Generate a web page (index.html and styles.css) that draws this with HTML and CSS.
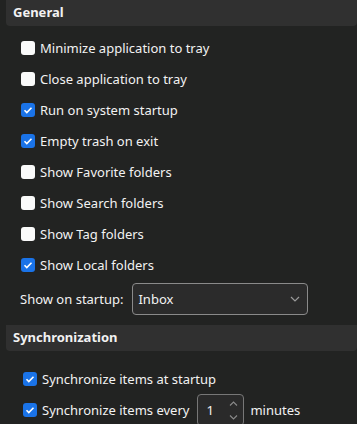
FILE: index.html
```html
<!DOCTYPE html>
<html lang="en">
<head>
    <meta charset="UTF-8">
    <meta name="viewport" content="width=device-width, initial-scale=1.0">
    <title>Settings</title>
    <link rel="stylesheet" href="styles.css">
</head>
<body>
    <div class="section-head">General</div>
    <div class="section-body">
        <label class="row"><span class="box"></span>Minimize application to tray</label>
        <label class="row"><span class="box"></span>Close application to tray</label>
        <label class="row"><span class="box checked"></span>Run on system startup</label>
        <label class="row"><span class="box checked"></span>Empty trash on exit</label>
        <label class="row"><span class="box"></span>Show Favorite folders</label>
        <label class="row"><span class="box"></span>Show Search folders</label>
        <label class="row"><span class="box"></span>Show Tag folders</label>
        <label class="row"><span class="box checked"></span>Show Local folders</label>
        <div class="startup">
            <span>Show on startup:</span>
            <div class="select">
                <span>Inbox</span>
                <svg width="10" height="6" viewBox="0 0 10 6"><path d="M1 1l4 4 4-4" fill="none" stroke="#9a9a9a" stroke-width="1.2"/></svg>
            </div>
        </div>
    </div>

    <div class="section-head">Synchronization</div>
    <div class="section-body sync">
        <label class="row"><span class="box checked"></span>Synchronize items at startup</label>
        <div class="row">
            <span class="box checked"></span>Synchronize items every
            <div class="spin">
                <span>1</span>
                <div class="arrows">
                    <svg width="9" height="5" viewBox="0 0 9 5"><path d="M1 4.5l3.5-3.5 3.5 3.5" fill="none" stroke="#8a8a8a" stroke-width="1.1"/></svg>
                    <svg width="9" height="5" viewBox="0 0 9 5"><path d="M1 0.5l3.5 3.5 3.5-3.5" fill="none" stroke="#8a8a8a" stroke-width="1.1"/></svg>
                </div>
            </div>
            minutes
        </div>
    </div>
</body>
</html>
```

FILE: styles.css
```css
body {
    margin: 0;
    background-color: #222322;
    color: #f2f2f2;
    font-family: "Noto Sans", "Open Sans", sans-serif;
    font-size: 13px;
    overflow: hidden;
}
.section-head {
    margin-left: 6px;
    height: 26px;
    line-height: 25px;
    padding-left: 7px;
    background-color: #303030;
    border-radius: 0 0 4px 4px;
    font-weight: bold;
    font-size: 13px;
}
.section-body {
    padding: 6px 0 10px 21px;
}
.row {
    display: flex;
    align-items: center;
    height: 31.1px;
}
.box {
    width: 14px;
    height: 14px;
    border-radius: 3px;
    background-color: #fafafa;
    margin-right: 5px;
    flex-shrink: 0;
}
.box.checked {
    background-color: #1a73e8;
    background-image: url("data:image/svg+xml;utf8,<svg xmlns='http://www.w3.org/2000/svg' width='14' height='14' viewBox='0 0 14 14'><path d='M3.5 7.2l2.3 2.3 4.7-4.8' fill='none' stroke='white' stroke-width='1.6'/></svg>");
}
.startup {
    display: flex;
    align-items: center;
    margin-left: -1px;
    margin-top: 2px;
}
.select {
    margin-left: 9px;
    width: 162px;
    height: 30px;
    border: 1px solid #8a8a8a;
    border-radius: 4px;
    background-color: #2b2b2b;
    display: flex;
    align-items: center;
    justify-content: space-between;
    padding: 0 7px 0 5px;
}
.sync {
    padding: 13px 0 0 23px;
}
.spin {
    margin: 0 6px 0 8px;
    width: 47px;
    height: 32px;
    flex-shrink: 0;
    border: 1px solid #777;
    border-radius: 4px;
    background-color: #2a2a2a;
    display: flex;
    align-items: center;
    justify-content: space-between;
    padding: 0 5px 0 8px;
    box-sizing: border-box;
}
.arrows {
    display: flex;
    flex-direction: column;
    gap: 9px;
}
```
